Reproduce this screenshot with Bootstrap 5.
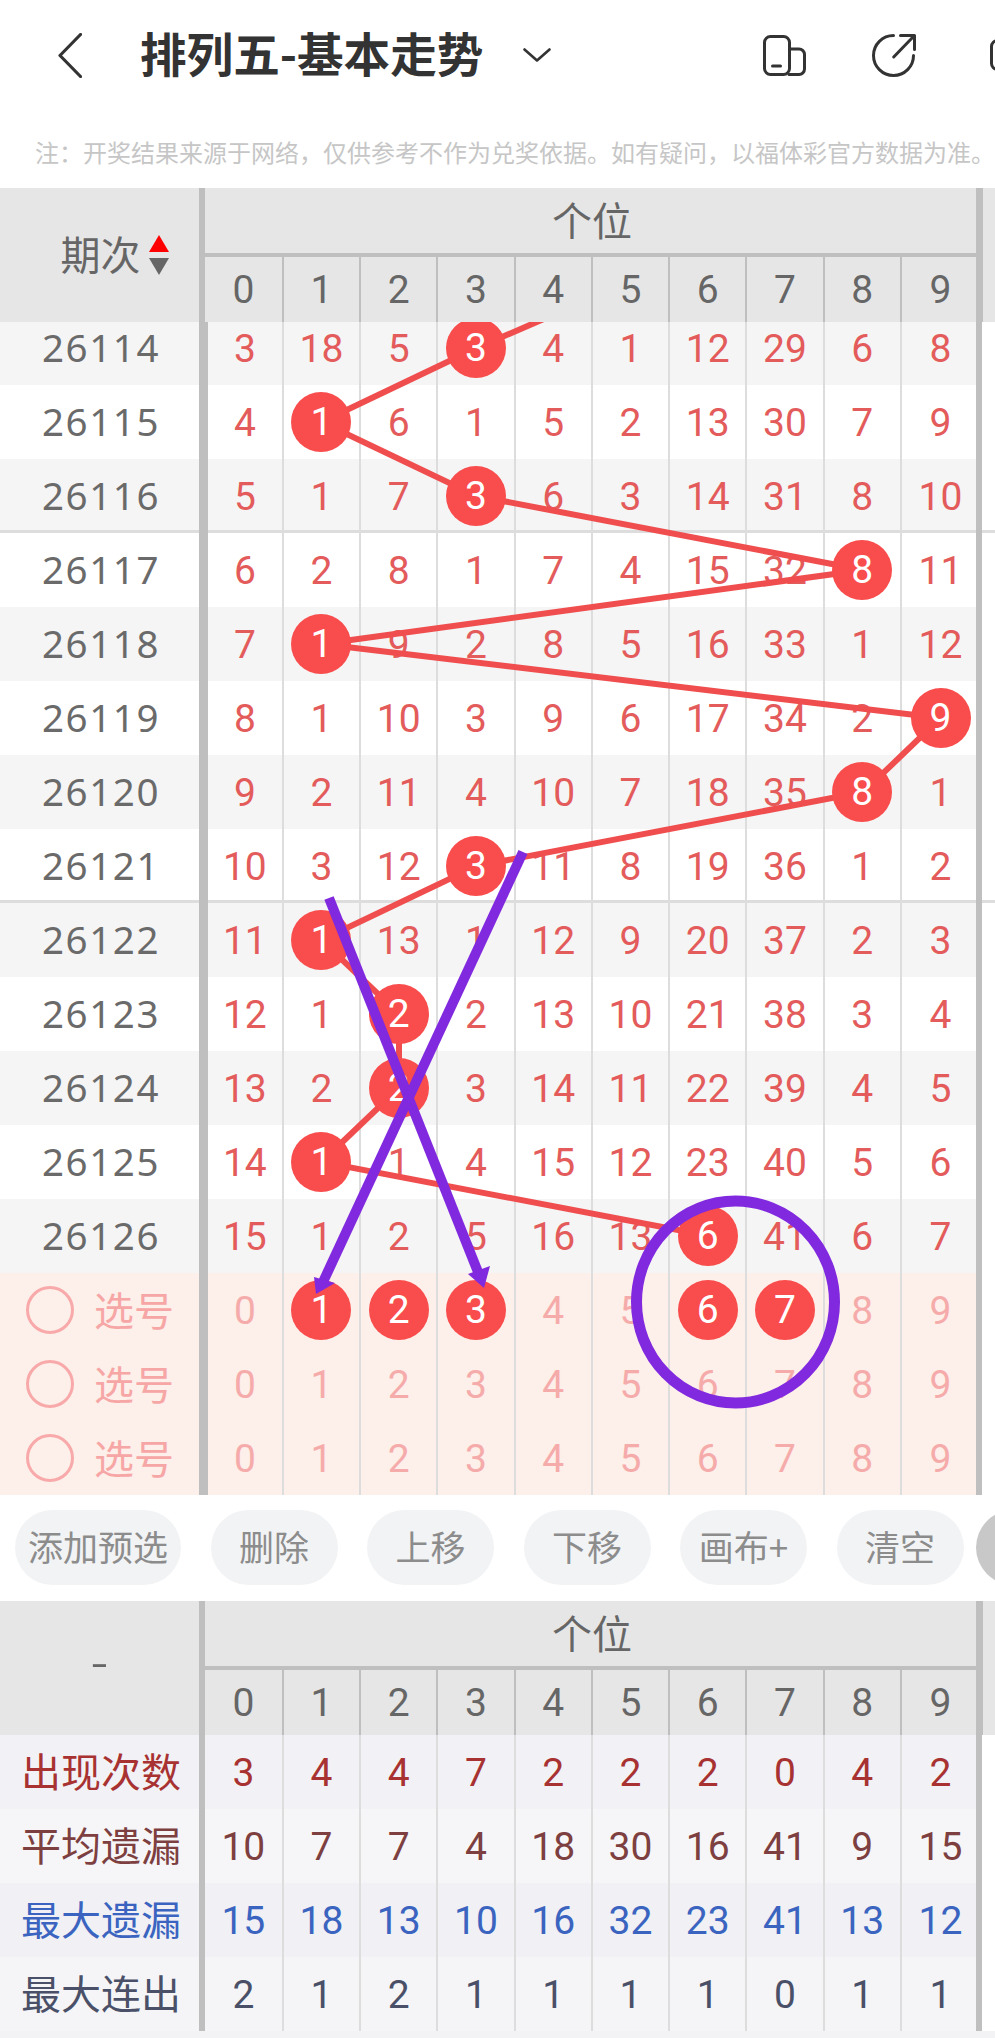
<!DOCTYPE html>
<html lang="zh-CN">
<head>
<meta charset="utf-8">
<title>排列五-基本走势</title>
<link href="https://cdn.jsdelivr.net/npm/bootstrap@5.3.0/dist/css/bootstrap.min.css" rel="stylesheet">
<style>
html,body{background:#fff;overflow:hidden}
body{font-family:"Noto Sans","Noto Sans CJK SC",sans-serif;width:995px;height:2038px}
.topbar{height:110px;color:#333}
.topbar svg{stroke:#333;fill:none;stroke-width:3;stroke-linecap:round;stroke-linejoin:round;flex:none}
.ttl{font-size:46.6px;font-weight:700;line-height:1;margin:0 0 5px 58px;white-space:nowrap;font-family:"Noto Sans CJK SC",sans-serif}
.note{height:78px;padding:27px 0 0 35px;font-size:24px;line-height:30px;color:#c6c6c6;white-space:nowrap;font-family:"Noto Sans CJK SC",sans-serif}
.hd{background:#e6e6e6;height:134px}
.hd::after,.rw::after{content:"";flex:none;width:6.5px;margin-left:-3.2px;background:#bfbfbf}
.hl{width:205px;flex:none;border-right:6px solid #bfbfbf;font-size:40px;color:#666;padding-bottom:5px;font-family:"Noto Sans CJK SC",sans-serif}
.sortw{padding-left:30px}
.sortw svg{margin-top:5px}
.dash{font:300 56px/1 Roboto,sans-serif;margin-top:-3px}
.hm{width:774.2px;flex:none}
.hm1{height:65px;font-size:40px;color:#666;padding-bottom:4px;font-family:"Noto Sans CJK SC",sans-serif}
.hm2{height:69px;border-top:4px solid #bfbfbf}
.hm2 .cl:first-child{width:78.77px}
.cl{width:77.27px;flex:none;border-right:2.5px solid #ddd;display:flex;align-items:center;justify-content:center;padding-top:2px;line-height:1;font-family:Roboto,sans-serif;font-size:39px;font-weight:400;color:#e35b5b}
.cl:last-child{border-right:0}
.hm2 .cl{border-color:#bfbfbf;color:#666}
.rw{height:74px}
.lb{width:208px;flex:none;border-right:9px solid #bfbfbf;padding:0 0 2px 3px;font-size:38.5px;line-height:1;letter-spacing:1.6px;color:#6a6a6a;display:flex;align-items:center;justify-content:center}
.lb+.cl{width:75.77px}
.st .lb,.st .cl{background:#f5f5f5}
.dv{background:linear-gradient(#ddd,#ddd) bottom/100% 3px no-repeat}
.dv .lb,.dv .cl{box-shadow:inset 0 -3px 0 #ddd}
.plot{height:1173px}
.plot-in{margin-top:-11px}
.lines{position:absolute;left:0;top:0;z-index:1}
.ball{position:relative;z-index:2;width:60px;height:60px;background:#f94c4c;color:#fff;font-weight:400;flex:none;margin-top:-2px}
.pk .lb,.pk .cl{background:#fdefea;color:#f6abab}
.pk .lb{justify-content:flex-start;padding:0 0 0 26px;font-size:40px;letter-spacing:0;color:#f7a6a6;font-family:"Noto Sans CJK SC",sans-serif;gap:20px}
.pick{padding-bottom:3px}
.rd{width:48px;height:48px;border:3px solid #f8a9a9;flex:none}
.acts{height:106px;padding:15px 0 0 15px;gap:29.5px}
.pillb{height:75px;min-width:127px;padding:0 13px 4px;border:0;background:#f2f3f5;color:#8c8c8c;font-size:35px;white-space:nowrap;flex:none;font-family:"Noto Sans CJK SC",sans-serif;line-height:1}
.pillb.more{background:#c8c8c8;margin-left:-17px}
.sm .lb{width:205px;border-right-width:6px;font-size:40px;letter-spacing:0;padding-bottom:4px;font-family:"Noto Sans CJK SC",sans-serif}
.sm .lb+.cl{width:78.77px}
.r1 .lb,.r1 .cl{background:#f2f2f6;color:#a83232}
.r2 .lb,.r2 .cl{background:#f6f6f8;color:#7d3f3f}
.r3 .lb,.r3 .cl{background:#f0f0f5;color:#3a64bf}
.r4 .lb,.r4 .cl{background:#f5f5f7;color:#4a5068}
.foot{height:7px;background:#f3f3f5}
.ink{position:absolute;left:0;top:0;z-index:5;pointer-events:none}
</style>
</head>
<body class="position-relative">

<header class="topbar d-flex align-items-center overflow-hidden">
  <svg width="24" height="45" viewBox="0 0 24 45" style="margin-left:58px"><path d="M22.5 1.5 2 22.5 22.5 43.5" stroke-width="3.2"/></svg>
  <div class="ttl">排列五-基本走势</div>
  <svg width="28" height="14" viewBox="0 0 28 14" style="margin-left:40px"><path d="M1.5 1.5 14 12.5 26.5 1.5" stroke-width="2.6"/></svg>
  <svg width="43" height="41" viewBox="0 0 43 41" style="margin-left:212px"><rect x="1.5" y="1.5" width="25" height="38" rx="6"/><path d="M27 14h9a5.5 5.5 0 0 1 5.5 5.5v14.5a5.5 5.5 0 0 1-5.5 5.5h-10M9.5 31h8"/></svg>
  <svg width="44" height="43" viewBox="0 0 44 43" style="margin-left:66px"><path d="M21.5 1.5A20 20 0 1 0 41.5 21.5M21.7 23 41.5 2.5M28.5 1.5h14v14"/></svg>
  <svg width="5" height="32" viewBox="0 0 5 32" style="margin-left:74px"><rect x="1.5" y="1.5" width="24" height="29" rx="6"/></svg>
</header>

<div class="note">注&#xFF1A;开奖结果来源于网络&#xFF0C;仅供参考不作为兑奖依据。如有疑问&#xFF0C;以福体彩官方数据为准。</div>

<div class="hd d-flex">
  <div class="hl sortw d-flex align-items-center justify-content-center gap-2">
    <span>期次</span>
    <svg width="20" height="40" viewBox="0 0 20 40"><path d="M10 0 20 17H0Z" fill="#f00"/><path d="M0 23H20L10 40Z" fill="#666"/></svg>
  </div>
  <div class="hm">
    <div class="hm1 d-flex align-items-center justify-content-center">个位</div>
    <div class="hm2 d-flex"><span class="cl">0</span><span class="cl">1</span><span class="cl">2</span><span class="cl">3</span><span class="cl">4</span><span class="cl">5</span><span class="cl">6</span><span class="cl">7</span><span class="cl">8</span><span class="cl">9</span></div>
  </div>
</div>

<div class="plot position-relative overflow-hidden">
  <svg class="lines" width="995" height="1173" viewBox="0 322 995 1173"><polyline fill="none" stroke="#f04e4e" stroke-width="6" points="571.5,307 476.5,348 321.5,422 476.5,496 863.5,570 321.5,644 940.5,718 863.5,792 476.5,866 321.5,940 399,1014 399,1088 321.5,1162 709.5,1236"/></svg>
  <div class="plot-in">
    <div class="rw st d-flex"><div class="lb">26114</div><span class="cl">3</span><span class="cl">18</span><span class="cl">5</span><span class="cl"><span class="ball rounded-circle d-flex align-items-center justify-content-center">3</span></span><span class="cl">4</span><span class="cl">1</span><span class="cl">12</span><span class="cl">29</span><span class="cl">6</span><span class="cl">8</span></div>
    <div class="rw d-flex"><div class="lb">26115</div><span class="cl">4</span><span class="cl"><span class="ball rounded-circle d-flex align-items-center justify-content-center">1</span></span><span class="cl">6</span><span class="cl">1</span><span class="cl">5</span><span class="cl">2</span><span class="cl">13</span><span class="cl">30</span><span class="cl">7</span><span class="cl">9</span></div>
    <div class="rw st dv d-flex"><div class="lb">26116</div><span class="cl">5</span><span class="cl">1</span><span class="cl">7</span><span class="cl"><span class="ball rounded-circle d-flex align-items-center justify-content-center">3</span></span><span class="cl">6</span><span class="cl">3</span><span class="cl">14</span><span class="cl">31</span><span class="cl">8</span><span class="cl">10</span></div>
    <div class="rw d-flex"><div class="lb">26117</div><span class="cl">6</span><span class="cl">2</span><span class="cl">8</span><span class="cl">1</span><span class="cl">7</span><span class="cl">4</span><span class="cl">15</span><span class="cl">32</span><span class="cl"><span class="ball rounded-circle d-flex align-items-center justify-content-center">8</span></span><span class="cl">11</span></div>
    <div class="rw st d-flex"><div class="lb">26118</div><span class="cl">7</span><span class="cl"><span class="ball rounded-circle d-flex align-items-center justify-content-center">1</span></span><span class="cl">9</span><span class="cl">2</span><span class="cl">8</span><span class="cl">5</span><span class="cl">16</span><span class="cl">33</span><span class="cl">1</span><span class="cl">12</span></div>
    <div class="rw d-flex"><div class="lb">26119</div><span class="cl">8</span><span class="cl">1</span><span class="cl">10</span><span class="cl">3</span><span class="cl">9</span><span class="cl">6</span><span class="cl">17</span><span class="cl">34</span><span class="cl">2</span><span class="cl"><span class="ball rounded-circle d-flex align-items-center justify-content-center">9</span></span></div>
    <div class="rw st d-flex"><div class="lb">26120</div><span class="cl">9</span><span class="cl">2</span><span class="cl">11</span><span class="cl">4</span><span class="cl">10</span><span class="cl">7</span><span class="cl">18</span><span class="cl">35</span><span class="cl"><span class="ball rounded-circle d-flex align-items-center justify-content-center">8</span></span><span class="cl">1</span></div>
    <div class="rw dv d-flex"><div class="lb">26121</div><span class="cl">10</span><span class="cl">3</span><span class="cl">12</span><span class="cl"><span class="ball rounded-circle d-flex align-items-center justify-content-center">3</span></span><span class="cl">11</span><span class="cl">8</span><span class="cl">19</span><span class="cl">36</span><span class="cl">1</span><span class="cl">2</span></div>
    <div class="rw st d-flex"><div class="lb">26122</div><span class="cl">11</span><span class="cl"><span class="ball rounded-circle d-flex align-items-center justify-content-center">1</span></span><span class="cl">13</span><span class="cl">1</span><span class="cl">12</span><span class="cl">9</span><span class="cl">20</span><span class="cl">37</span><span class="cl">2</span><span class="cl">3</span></div>
    <div class="rw d-flex"><div class="lb">26123</div><span class="cl">12</span><span class="cl">1</span><span class="cl"><span class="ball rounded-circle d-flex align-items-center justify-content-center">2</span></span><span class="cl">2</span><span class="cl">13</span><span class="cl">10</span><span class="cl">21</span><span class="cl">38</span><span class="cl">3</span><span class="cl">4</span></div>
    <div class="rw st d-flex"><div class="lb">26124</div><span class="cl">13</span><span class="cl">2</span><span class="cl"><span class="ball rounded-circle d-flex align-items-center justify-content-center">2</span></span><span class="cl">3</span><span class="cl">14</span><span class="cl">11</span><span class="cl">22</span><span class="cl">39</span><span class="cl">4</span><span class="cl">5</span></div>
    <div class="rw d-flex"><div class="lb">26125</div><span class="cl">14</span><span class="cl"><span class="ball rounded-circle d-flex align-items-center justify-content-center">1</span></span><span class="cl">1</span><span class="cl">4</span><span class="cl">15</span><span class="cl">12</span><span class="cl">23</span><span class="cl">40</span><span class="cl">5</span><span class="cl">6</span></div>
    <div class="rw st d-flex"><div class="lb">26126</div><span class="cl">15</span><span class="cl">1</span><span class="cl">2</span><span class="cl">5</span><span class="cl">16</span><span class="cl">13</span><span class="cl"><span class="ball rounded-circle d-flex align-items-center justify-content-center">6</span></span><span class="cl">41</span><span class="cl">6</span><span class="cl">7</span></div>
    <div class="rw pk d-flex"><div class="lb"><span class="rd rounded-circle"></span><span class="pick">选号</span></div><span class="cl">0</span><span class="cl"><span class="ball rounded-circle d-flex align-items-center justify-content-center">1</span></span><span class="cl"><span class="ball rounded-circle d-flex align-items-center justify-content-center">2</span></span><span class="cl"><span class="ball rounded-circle d-flex align-items-center justify-content-center">3</span></span><span class="cl">4</span><span class="cl">5</span><span class="cl"><span class="ball rounded-circle d-flex align-items-center justify-content-center">6</span></span><span class="cl"><span class="ball rounded-circle d-flex align-items-center justify-content-center">7</span></span><span class="cl">8</span><span class="cl">9</span></div>
    <div class="rw pk d-flex"><div class="lb"><span class="rd rounded-circle"></span><span class="pick">选号</span></div><span class="cl">0</span><span class="cl">1</span><span class="cl">2</span><span class="cl">3</span><span class="cl">4</span><span class="cl">5</span><span class="cl">6</span><span class="cl">7</span><span class="cl">8</span><span class="cl">9</span></div>
    <div class="rw pk d-flex"><div class="lb"><span class="rd rounded-circle"></span><span class="pick">选号</span></div><span class="cl">0</span><span class="cl">1</span><span class="cl">2</span><span class="cl">3</span><span class="cl">4</span><span class="cl">5</span><span class="cl">6</span><span class="cl">7</span><span class="cl">8</span><span class="cl">9</span></div>
  </div>
</div>

<div class="acts d-flex overflow-hidden">
  <button type="button" class="btn pillb rounded-pill">添加预选</button>
  <button type="button" class="btn pillb rounded-pill">删除</button>
  <button type="button" class="btn pillb rounded-pill">上移</button>
  <button type="button" class="btn pillb rounded-pill">下移</button>
  <button type="button" class="btn pillb rounded-pill">画布+</button>
  <button type="button" class="btn pillb rounded-pill">清空</button>
  <button type="button" class="btn pillb more rounded-pill" aria-label="更多"></button>
</div>

<div class="hd d-flex">
  <div class="hl d-flex align-items-center justify-content-center"><span class="dash">-</span></div>
  <div class="hm">
    <div class="hm1 d-flex align-items-center justify-content-center">个位</div>
    <div class="hm2 d-flex"><span class="cl">0</span><span class="cl">1</span><span class="cl">2</span><span class="cl">3</span><span class="cl">4</span><span class="cl">5</span><span class="cl">6</span><span class="cl">7</span><span class="cl">8</span><span class="cl">9</span></div>
  </div>
</div>
<div class="rw sm r1 d-flex"><div class="lb">出现次数</div><span class="cl">3</span><span class="cl">4</span><span class="cl">4</span><span class="cl">7</span><span class="cl">2</span><span class="cl">2</span><span class="cl">2</span><span class="cl">0</span><span class="cl">4</span><span class="cl">2</span></div>
<div class="rw sm r2 d-flex"><div class="lb">平均遗漏</div><span class="cl">10</span><span class="cl">7</span><span class="cl">7</span><span class="cl">4</span><span class="cl">18</span><span class="cl">30</span><span class="cl">16</span><span class="cl">41</span><span class="cl">9</span><span class="cl">15</span></div>
<div class="rw sm r3 d-flex"><div class="lb">最大遗漏</div><span class="cl">15</span><span class="cl">18</span><span class="cl">13</span><span class="cl">10</span><span class="cl">16</span><span class="cl">32</span><span class="cl">23</span><span class="cl">41</span><span class="cl">13</span><span class="cl">12</span></div>
<div class="rw sm r4 d-flex"><div class="lb">最大连出</div><span class="cl">2</span><span class="cl">1</span><span class="cl">2</span><span class="cl">1</span><span class="cl">1</span><span class="cl">1</span><span class="cl">1</span><span class="cl">0</span><span class="cl">1</span><span class="cl">1</span></div>
<div class="foot"></div>

<svg class="ink" width="995" height="2038" viewBox="0 0 995 2038">
  <g fill="none" stroke="#8129de" stroke-width="10">
    <path d="M329 898 478 1272"/>
    <path d="M523 852 323 1282"/>
    <ellipse cx="735.5" cy="1302" rx="99" ry="101" stroke-width="11"/>
  </g>
  <path d="M468 1274 490 1266 484 1288Z" fill="#8129de"/>
  <path d="M314 1277 335 1283 316 1294Z" fill="#8129de"/>
</svg>

<script src="https://cdn.jsdelivr.net/npm/bootstrap@5.3.0/dist/js/bootstrap.bundle.min.js"></script>
</body>
</html>
